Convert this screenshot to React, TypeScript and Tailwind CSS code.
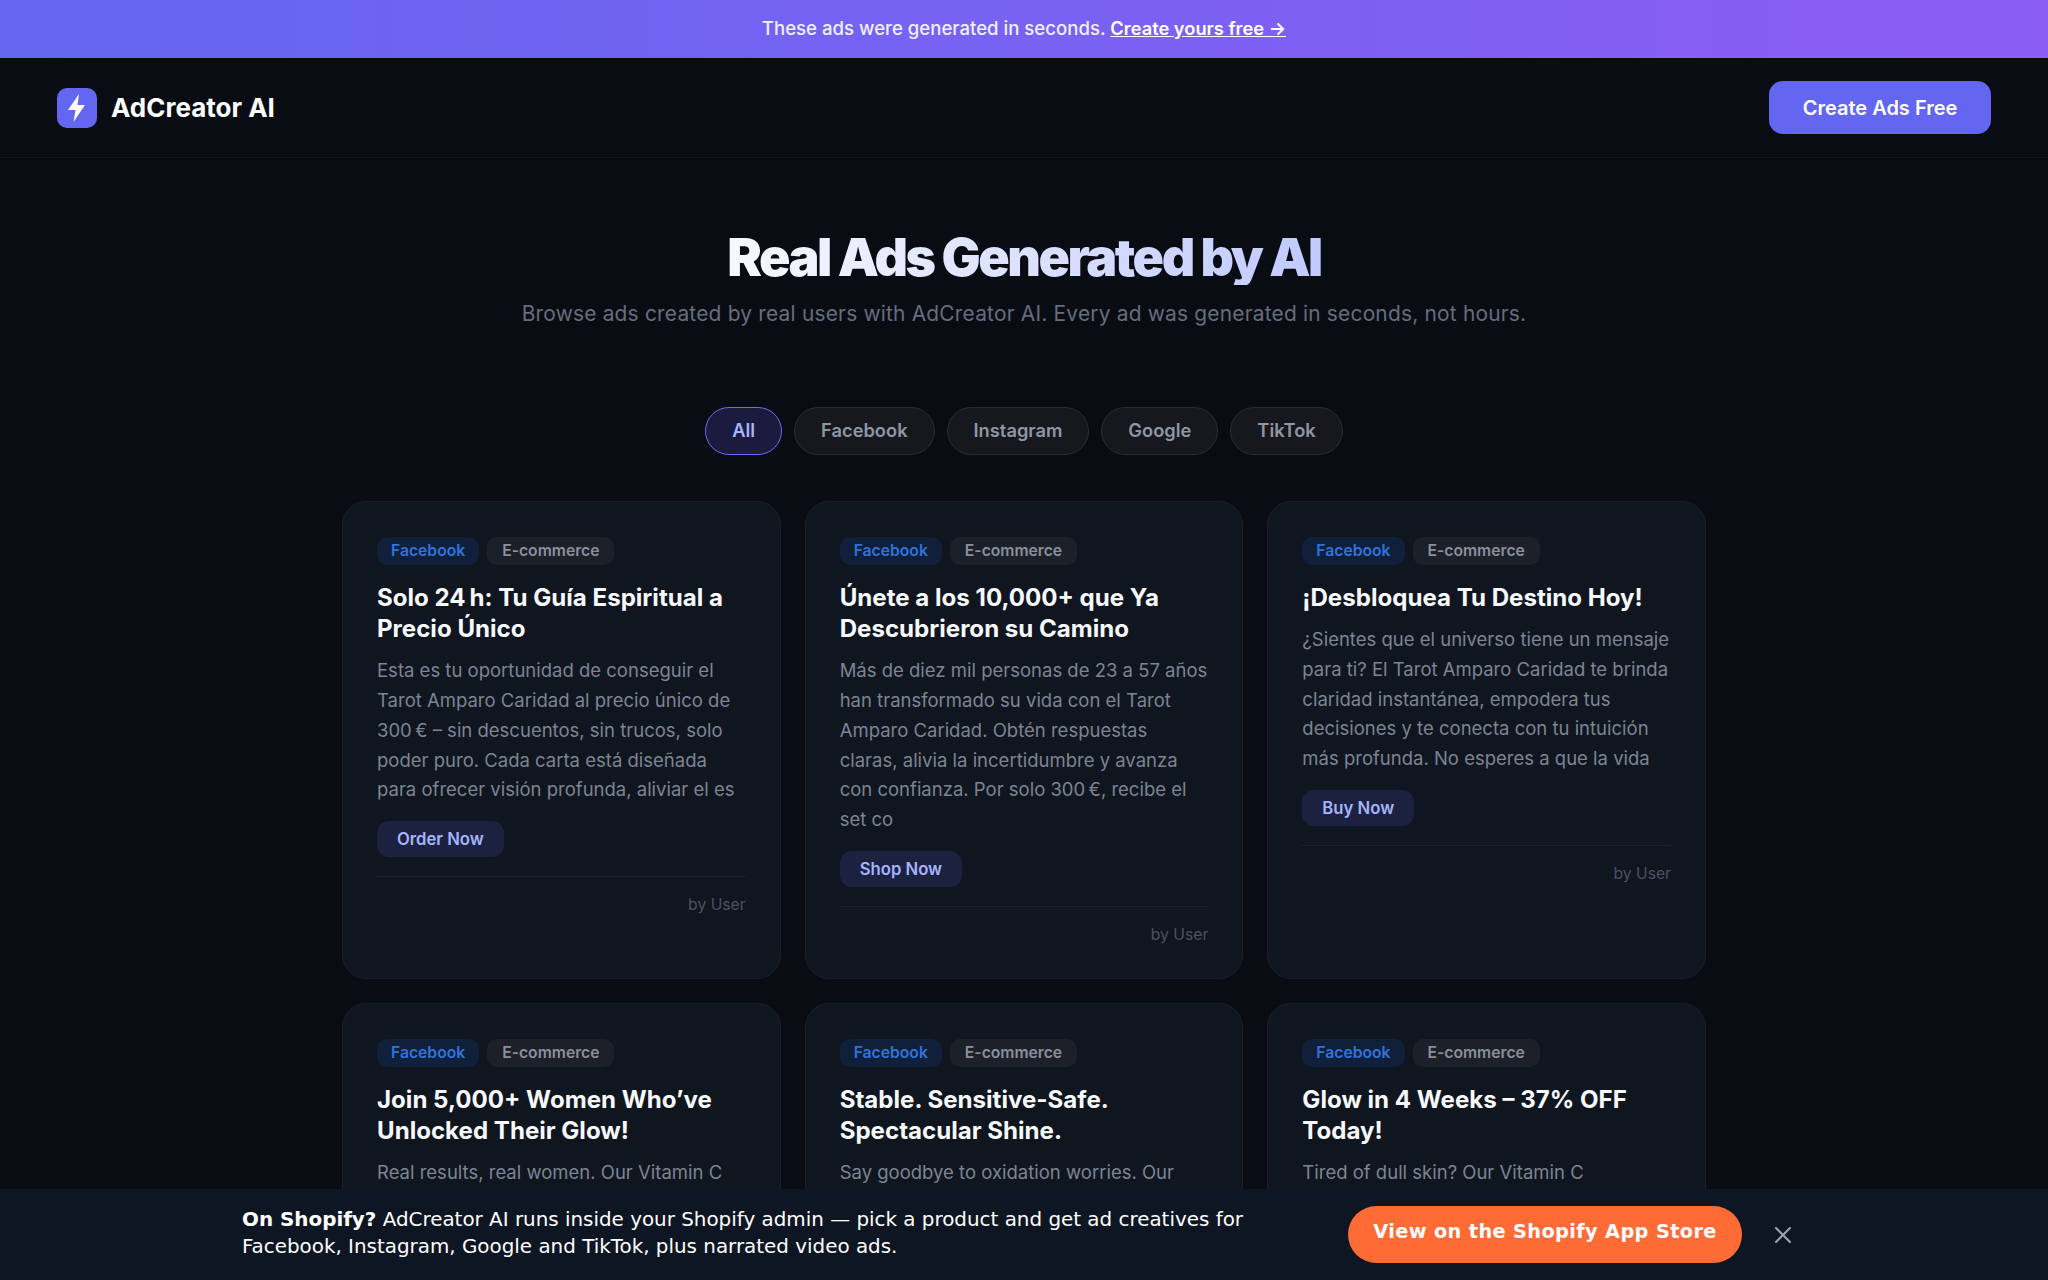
import { X } from "lucide-react";

type Ad = {
  title: string;
  body: string;
  cta: string;
};

const filters = ["All", "Facebook", "Instagram", "Google", "TikTok"];

const ads: Ad[] = [
  {
    title: "Solo 24\u202Fh: Tu Guía Espiritual a Precio Único",
    body: "Esta es tu oportunidad de conseguir el Tarot Amparo Caridad al precio único de 300\u202F€ – sin descuentos, sin trucos, solo poder puro. Cada carta está diseñada para ofrecer visión profunda, aliviar el es",
    cta: "Order Now",
  },
  {
    title: "Únete a los 10,000+ que Ya Descubrieron su Camino",
    body: "Más de diez mil personas de 23 a 57 años han transformado su vida con el Tarot Amparo Caridad. Obtén respuestas claras, alivia la incertidumbre y avanza con confianza. Por solo 300\u202F€, recibe el set co",
    cta: "Shop Now",
  },
  {
    title: "¡Desbloquea Tu Destino Hoy!",
    body: "¿Sientes que el universo tiene un mensaje para ti? El Tarot Amparo Caridad te brinda claridad instantánea, empodera tus decisiones y te conecta con tu intuición más profunda. No esperes a que la vida",
    cta: "Buy Now",
  },
  {
    title: "Join 5,000+ Women Who’ve Unlocked Their Glow!",
    body: "Real results, real women. Our Vitamin C serum brightens, firms and protects your skin every single day.",
    cta: "Shop Now",
  },
  {
    title: "Stable. Sensitive-Safe. Spectacular Shine.",
    body: "Say goodbye to oxidation worries. Our formula stays stable and gentle on the most sensitive skin.",
    cta: "Shop Now",
  },
  {
    title: "Glow in 4 Weeks – 37% OFF Today!",
    body: "Tired of dull skin? Our Vitamin C brightening serum brings back your natural radiance in just four weeks.",
    cta: "Shop Now",
  },
];

function AdCard({ ad }: { ad: Ad }) {
  return (
    <article className="rounded-[24px] border border-[#1a1f2b] bg-[#101620] px-[34px] pt-[35px] pb-[33px]">
      <div className="flex gap-[8px]">
        <span className="rounded-[10px] bg-[#101f3a] px-[14px] py-[4px] text-[15.7px] leading-[20px] font-semibold text-[#2f74dc]">
          Facebook
        </span>
        <span className="rounded-[10px] bg-[#1c2029] px-[15px] py-[4px] text-[15.7px] leading-[20px] font-semibold text-[#8a8f9b]">
          E-commerce
        </span>
      </div>
      <h3 className="mt-[17px] text-[24.1px] leading-[31.2px] font-bold text-[#f8f9fb]">
        {ad.title}
      </h3>
      <p className="mt-[12px] text-[18.5px] leading-[29.7px] text-[#7d8492]">
        {ad.body}
      </p>
      <button
        type="button"
        className="mt-[16px] rounded-[12px] bg-[#1d2140] px-[20px] py-[7px] text-[16.7px] leading-[22px] font-semibold text-[#a5b4fc]"
      >
        {ad.cta}
      </button>
      <div className="mt-[19px] border-t border-[#1c212c] pt-[18px] text-right text-[15.7px] leading-[20px] text-[#4b515e]">
        by User
      </div>
    </article>
  );
}

export default function App() {
  return (
    <div className="relative h-screen overflow-hidden bg-[#0a0c14] font-['Inter',sans-serif]">
      <div className="flex h-[58px] items-center justify-center bg-gradient-to-r from-[#6366f1] to-[#8b5cf6] text-[18.6px] font-medium text-white/90">
        <span>
          These ads were generated in seconds.{" "}
          <a href="#" className="text-[18.3px] font-semibold text-white underline">
            Create yours free →
          </a>
        </span>
      </div>

      <nav className="flex h-[100px] items-center justify-between border-b border-[#15171f] px-[57px]">
        <div className="flex items-center gap-[14px]">
          <div className="flex h-[40px] w-[40px] items-center justify-center rounded-[10px] bg-[#6366f1]">
            <svg width="20" height="30" viewBox="0 0 20 30" fill="white">
              <path d="M12 1 1 17h7.5L6.5 29 18 12h-7.5z" />
            </svg>
          </div>
          <span className="text-[26px] font-bold text-white">AdCreator AI</span>
        </div>
        <button
          type="button"
          className="h-[53px] w-[222px] rounded-[14px] bg-[#6366f1] text-[20px] font-semibold text-white"
        >
          Create Ads Free
        </button>
      </nav>

      <header className="pt-[73px] text-center">
        <h1 className="inline-block bg-gradient-to-r from-[#f8f8ff] to-[#c0caff] bg-clip-text text-[52px] leading-[54px] font-black tracking-[-0.048em] text-transparent">
          Real Ads Generated by AI
        </h1>
        <p className="mt-[15px] text-[20.9px] leading-[28px] tracking-[0.01em] text-[#666d7d]">
          Browse ads created by real users with AdCreator AI. Every ad was generated in seconds, not hours.
        </p>
      </header>

      <div className="mt-[79px] flex justify-center gap-[12px]">
        {filters.map((f, i) => (
          <button
            key={f}
            type="button"
            className={
              i === 0
                ? "h-[48px] rounded-full border-[1.5px] border-[#6a6df5] bg-[#1a1b3f] px-[26px] text-[18.3px] font-semibold text-[#a5b4fc]"
                : "h-[48px] rounded-full border border-[#2a2c33] bg-[#16181e] px-[26px] text-[18.3px] font-semibold text-[#8f96a3]"
            }
          >
            {f}
          </button>
        ))}
      </div>

      <main className="mx-auto mt-[46px] grid w-[1364px] grid-cols-3 gap-[24px]">
        {ads.map((ad) => (
          <AdCard key={ad.title} ad={ad} />
        ))}
      </main>

      <div className="absolute right-0 bottom-0 left-0 flex h-[91px] items-center bg-[#0f1623] pl-[242px] font-['DejaVu_Sans',sans-serif] text-white">
        <p className="mb-[3px] w-[1040px] text-[19.9px] leading-[27.4px]">
          <strong className="font-bold">On Shopify?</strong> AdCreator AI runs inside your Shopify admin — pick a product and get ad creatives for Facebook, Instagram, Google and TikTok, plus narrated video ads.
        </p>
        <a
          href="#"
          className="ml-[66px] flex h-[57px] w-[394px] items-center justify-center rounded-full bg-[#ff6b35] pb-[4px] text-[19.3px] font-bold tracking-[0.02em] text-white"
        >
          View on the Shopify App Store
        </a>
        <X className="ml-[27px] h-[28px] w-[28px] text-[#9ca3af]" strokeWidth={1.8} />
      </div>
    </div>
  );
}
